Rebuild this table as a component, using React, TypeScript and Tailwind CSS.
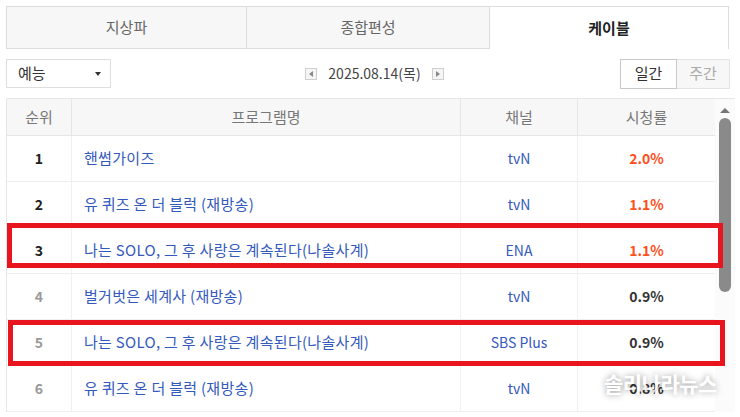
const rows = [
  { rank: 1, title: "핸썸가이즈", channel: "tvN", rate: "2.0%", hot: true },
  { rank: 2, title: "유 퀴즈 온 더 블럭 (재방송)", channel: "tvN", rate: "1.1%", hot: true },
  { rank: 3, title: "나는 SOLO, 그 후 사랑은 계속된다(나솔사계)", channel: "ENA", rate: "1.1%", hot: true },
  { rank: 4, title: "벌거벗은 세계사 (재방송)", channel: "tvN", rate: "0.9%", hot: false },
  { rank: 5, title: "나는 SOLO, 그 후 사랑은 계속된다(나솔사계)", channel: "SBS Plus", rate: "0.9%", hot: false },
  { rank: 6, title: "유 퀴즈 온 더 블럭 (재방송)", channel: "tvN", rate: "0.8%", hot: false },
];

function Tabs() {
  return (
    <div className="flex pl-[6px] pt-[6px]">
      <div className="w-[241px] h-[43px] flex items-center justify-center bg-[#f7f7f7] border border-[#dcdcdc] text-[15px] text-[#666]">
        지상파
      </div>
      <div className="w-[243px] h-[43px] flex items-center justify-center bg-[#f7f7f7] border-y border-r border-[#dcdcdc] text-[15px] text-[#666]">
        종합편성
      </div>
      <div className="w-[239px] h-[43px] flex items-center justify-center bg-white border-t border-r border-[#dcdcdc] text-[15px] font-bold text-[#222]">
        케이블
      </div>
    </div>
  );
}

function Toolbar() {
  return (
    <div className="flex items-center justify-between pl-[6px] pr-[10px] mt-[10px] h-[29px]">
      <div className="w-[105px] h-[29px] border border-[#dedede] flex items-center justify-between pl-[11px] pr-[9px] text-[15px] text-[#333]">
        <span>예능</span>
        <span className="w-0 h-0 border-l-[3px] border-r-[3px] border-t-[4px] border-l-transparent border-r-transparent border-t-[#333]" />
      </div>
      <div className="flex items-center gap-[11px] ml-[18px] text-[14px] text-[#444]">
        <span className="w-[12px] h-[12px] border border-[#cfcfcf] bg-[#f5f5f5] flex items-center justify-center">
          <span className="w-0 h-0 border-t-[3px] border-b-[3px] border-r-[4px] border-t-transparent border-b-transparent border-r-[#888]" />
        </span>
        <span>2025.08.14(목)</span>
        <span className="w-[12px] h-[12px] border border-[#cfcfcf] bg-[#f5f5f5] flex items-center justify-center">
          <span className="w-0 h-0 border-t-[3px] border-b-[3px] border-l-[4px] border-t-transparent border-b-transparent border-l-[#888]" />
        </span>
      </div>
      <div className="flex h-[30px] text-[15px]">
        <div className="w-[57px] flex items-center justify-center border border-[#c8c8c8] bg-white text-[#333]">일간</div>
        <div className="w-[53px] flex items-center justify-center border-y border-r border-[#e3e3e3] bg-[#f7f7f7] text-[#aaa]">주간</div>
      </div>
    </div>
  );
}

function Table() {
  return (
    <div className="relative mt-[10px] ml-[6px] w-[729px] border-t border-l border-[#e6e6e6] flex">
      <div className="w-[709px]">
        <div className="flex h-[37px] bg-[#f7f7f7] border-b border-[#e6e6e6] text-[15px] text-[#777]">
          <div className="w-[65px] flex items-center justify-center border-r border-[#e6e6e6]">순위</div>
          <div className="w-[389px] flex items-center justify-center border-r border-[#e6e6e6]">프로그램명</div>
          <div className="w-[117px] flex items-center justify-center border-r border-[#e6e6e6]">채널</div>
          <div className="flex-1 flex items-center justify-center">시청률</div>
        </div>
        {rows.map((r) => (
          <div key={r.rank} className="flex h-[46px] border-b border-[#eeeeee] text-[14px]">
            <div
              className={
                "w-[65px] flex items-center justify-center border-r border-[#f0f0f0] font-bold " +
                (r.rank <= 3 ? "text-[#222]" : "text-[#999]")
              }
            >
              {r.rank}
            </div>
            <div className="w-[389px] flex items-center pl-[12px] border-r border-[#f0f0f0] text-[15px] tracking-[0.3px] text-[#3459bd] whitespace-nowrap">
              {r.title}
            </div>
            <div className="w-[117px] flex items-center justify-center border-r border-[#f0f0f0] text-[#3459bd]">
              {r.channel}
            </div>
            <div
              className={
                "flex-1 flex items-center justify-center font-bold " + (r.hot ? "text-[#ff4f1c]" : "text-[#333]")
              }
            >
              {r.rate}
            </div>
          </div>
        ))}
      </div>
      <div className="w-[20px] bg-[#fbfbfb] flex flex-col items-center pt-[9px]">
        <span className="w-0 h-0 border-l-[5px] border-r-[5px] border-b-[5px] border-l-transparent border-r-transparent border-b-[#777]" />
        <span className="mt-[5px] w-[12px] h-[174px] rounded-full bg-[#8a8a8a]" />
      </div>
      <div className="absolute left-0 top-[124px] w-[716px] h-[45px] border-[5px] border-[#e8141e]" />
      <div className="absolute left-[1px] top-[221px] w-[717px] h-[46px] border-[5px] border-[#e8141e]" />
    </div>
  );
}

export default function App() {
  return (
    <div className="relative w-[740px] h-[417px] overflow-hidden bg-white font-['Noto_Sans_CJK_KR','Noto_Sans',sans-serif]">
      <Tabs />
      <Toolbar />
      <Table />
      <div className="absolute left-[604px] top-[368px] text-[21px] font-bold text-white [text-shadow:0_0_6px_rgba(0,0,0,0.45)] tracking-[-0.5px] opacity-90">
        솔리나라뉴스
      </div>
    </div>
  );
}
